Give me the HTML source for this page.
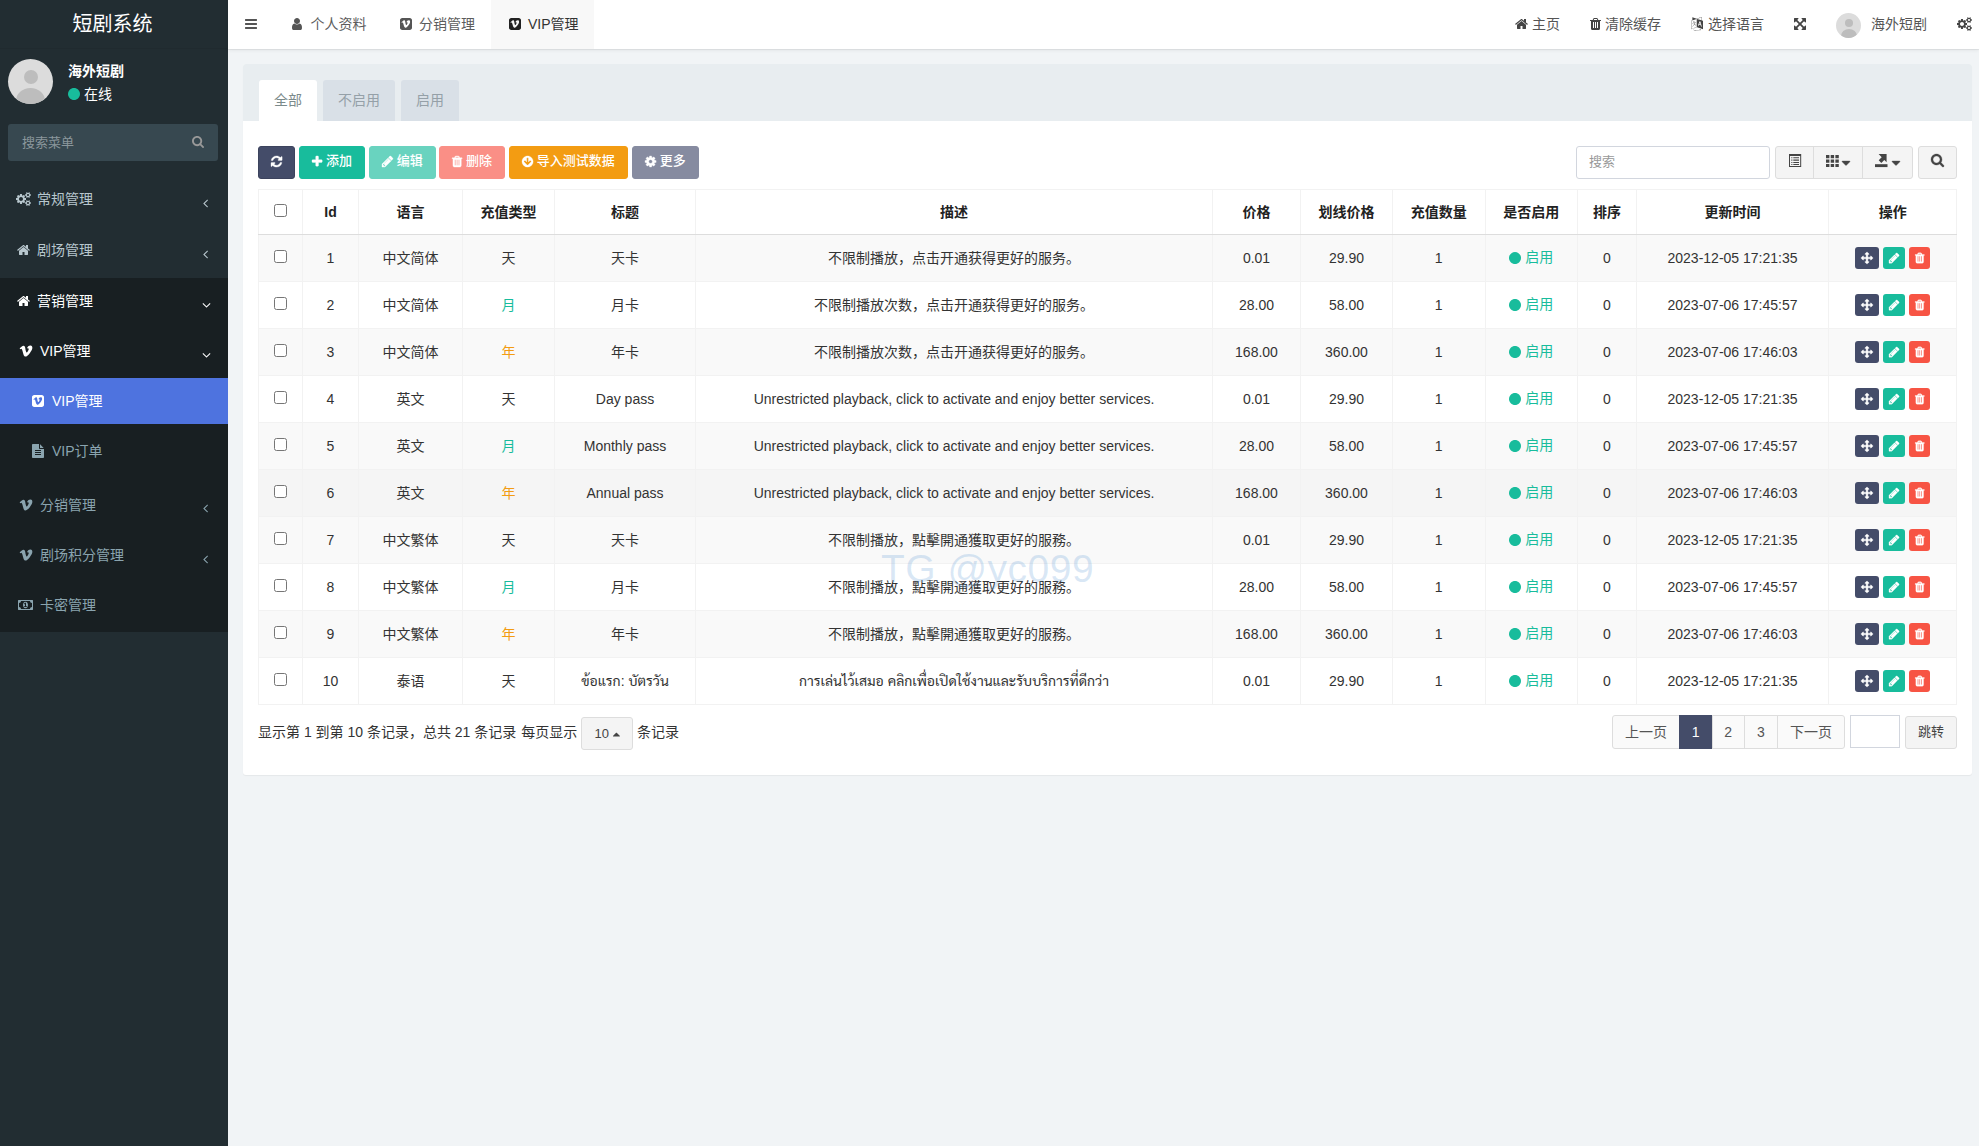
<!DOCTYPE html>
<html lang="zh-CN">
<head>
<meta charset="utf-8">
<title>短剧系统</title>
<style>
*{box-sizing:border-box}
html,body{margin:0;padding:0}
body{width:1979px;height:1146px;overflow:hidden;position:relative;background:#f1f4f6;color:#333;
 font-family:"Liberation Sans","Noto Sans CJK SC",sans-serif;font-size:14px;line-height:20px}
.i{display:inline-block;vertical-align:-2px;overflow:visible}
.abs{position:absolute}
/* sidebar */
#side{position:absolute;left:0;top:0;width:228px;height:1146px;background:#222d32}
#logo{position:absolute;left:0;top:0;width:228px;height:49px;line-height:49px;text-align:center;color:#fff;font-size:20px;border-bottom:1px solid #202a2f;padding-right:3px}
#ava{position:absolute;left:8px;top:59px;width:45px;height:45px;border-radius:50%;background:#dcdcdc;overflow:hidden}
#ava:before{content:"";position:absolute;left:15.500px;top:11px;width:14px;height:14px;border-radius:50%;background:#bdbdbd}
#ava:after{content:"";position:absolute;left:8px;top:29px;width:29px;height:26px;border-radius:50%;background:#bdbdbd}
#uname{position:absolute;left:68px;top:61px;color:#fff;font-weight:bold;font-size:14px}
#ustat{position:absolute;left:68px;top:84px;color:#fff;font-size:14px}
#ustat .i{color:#18bc9c}
#sform{position:absolute;left:8px;top:124px;width:210px;height:37px;background:#374850;border-radius:3px;color:#8b979c;padding:8px 14px;font-size:13px;line-height:21px}
#sform .i{position:absolute;left:184px;top:11px;color:#999}
.m{position:absolute;left:0;width:228px;height:46px;color:#b8c7ce;font-size:14px;line-height:46px;white-space:nowrap}
.m .ic{position:absolute;top:0;height:46px;display:flex;align-items:center}
.m .tx{position:absolute;top:0}
.m .ar{position:absolute;top:3.700px;height:46px;display:flex;align-items:center}
.m.w{color:#fff}
.m.sub{color:#8aa4af}
#dark{position:absolute;left:0;top:277.500px;width:228px;height:354.500px;background:#181f22}
.m.act{background:#4e73df;color:#fff}
/* header */
#hdr{position:absolute;left:228px;top:0;width:1751px;height:49px;background:#fff;box-shadow:0 1px 0 rgba(0,0,0,.05),0 1px 4px rgba(0,0,0,.08)}
#hdr .t{position:absolute;top:0;height:49px;line-height:48px;color:#555;white-space:nowrap;font-size:14px}
#hdr .t .i{color:#444}
#hdr .tab .i,#hdr .bars .i{color:#555}
#hdr .tab{color:#5c5c5c}
#hdr .tab.on{background:#f8f8f8;color:#333}
#hdr .tab.on .i{color:#222}
#hava{position:absolute;top:13px;left:1608px;width:25px;height:25px;border-radius:50%;background:#dcdcdc;overflow:hidden}
#hava:before{content:"";position:absolute;left:8.500px;top:6px;width:8px;height:8px;border-radius:50%;background:#bdbdbd}
#hava:after{content:"";position:absolute;left:4.500px;top:16px;width:16px;height:14px;border-radius:50%;background:#bdbdbd}
/* panel */
#panel{position:absolute;left:243px;top:64px;width:1728.500px;height:711px;background:#fff;border-radius:3px;box-shadow:0 1px 1px rgba(0,0,0,.05)}
#phead{position:absolute;left:0;top:0;width:100%;height:56.500px;background:#e8edf0;border-radius:3px 3px 0 0}
.pt{position:absolute;top:16px;height:40.500px;line-height:40px;padding:0 15px;background:#d9e0e7;color:#95a0a8;border-radius:3px 3px 0 0;font-size:14px}
.pt.on{background:#fff;color:#7b8a8b}
.btn{position:absolute;top:146px;height:33px;line-height:27.500px;font-weight:500;border-radius:3px;color:#fff;font-size:13px;text-align:center;white-space:nowrap;border:1px solid transparent}
.btn .i{vertical-align:-2.500px}
.b-pri{background:#444c69;border-color:#3c435d}
.b-suc{background:#18bc9c;border-color:#18bc9c}
.b-suc.dis{background:#69d3bf;border-color:#69d3bf}
.b-dan.dis{background:#fa8f86;border-color:#fa8f86}
.b-war{background:#f39c12;border-color:#f39c12}
.b-pri.dis{background:#868ba0;border-color:#868ba0}
.b-def{background:#f4f4f4;border-color:#ddd;color:#444}
#sinput{position:absolute;left:1576px;top:146px;width:194px;height:33px;border:1px solid #d2d6de;border-radius:3px;background:#fff;color:#999;font-size:13px;line-height:29.500px;padding:0 12px}
/* table */
#tbl{position:absolute;left:258px;top:189px;width:1697.500px;border-collapse:collapse;table-layout:fixed;font-size:14px}
#tbl th,#tbl td{border:1px solid #f2f2f2;text-align:center;padding:0;white-space:nowrap;overflow:hidden}
#tbl th{height:45px;font-weight:bold;color:#222;border-bottom:1px solid #ddd}
#tbl td{height:47px;color:#333}
#tbl th:last-child,#tbl td:last-child{padding-left:1px}
#tbl tbody tr:nth-child(odd){background:#f9f9f9}
#tbl tbody tr.hov{background:#f5f5f5}
.cb{display:inline-block;width:13px;height:13px;border:1px solid #767676;border-radius:2.500px;background:#fff;vertical-align:0px}
.td{color:#333}.tm{color:#18bc9c}.ty{color:#f39c12}
.st{color:#18bc9c}
.su{position:relative;top:-.8px}
.ob .fa path,.btn .fa path{stroke:currentColor;stroke-width:45}
.ob{display:inline-block;height:22px;border-radius:3px;color:#fff;vertical-align:middle;text-align:center;line-height:20px;margin:0 2px}
.ob .i{vertical-align:-1.500px}
.o1{background:#444c69;width:24px}.o2{background:#18bc9c;width:22px}.o3{background:#f75444;width:21px}
.th{font-family:"Liberation Sans","Sarabun","Noto Sans Thai Looped","Loma","Noto Sans Thai","Noto Sans CJK SC",sans-serif}
/* footer */
#pinfo{position:absolute;left:258px;top:722px;font-size:14px;color:#333;white-space:nowrap}
.pg{position:absolute;top:715px;height:34px;line-height:32px;border:1px solid #ddd;background:#fafafa;color:#555;text-align:center;font-size:14px}
.pg.on{background:#444c69;border-color:#444c69;color:#fff}
#wm{position:absolute;left:881px;top:546px;font-size:39px;line-height:46px;color:rgba(120,170,220,.28);white-space:nowrap;letter-spacing:.5px}
</style>
</head>
<body>
<!-- SIDEBAR -->
<div id="side">
 <div id="logo">短剧系统</div>
 <div id="ava"></div>
 <div id="uname">海外短剧</div>
 <div id="ustat"><svg class="i fa" width="12.0" height="14" viewBox="0 0 1536 1792" ><path fill="currentColor" d="M1536 896C1536 472 1192 128 768 128C344 128 0 472 0 896C0 1320 344 1664 768 1664C1192 1664 1536 1320 1536 896Z"/></svg> 在线</div>
 <div id="sform">搜索菜单<svg class="i fa" width="12.07" height="13" viewBox="0 0 1664 1792" ><path fill="currentColor" d="M1152 832C1152 1079 951 1280 704 1280C457 1280 256 1079 256 832C256 585 457 384 704 384C951 384 1152 585 1152 832ZM1664 1664C1664 1630 1650 1597 1627 1574L1284 1231C1365 1114 1408 974 1408 832C1408 443 1093 128 704 128C315 128 0 443 0 832C0 1221 315 1536 704 1536C846 1536 986 1493 1103 1412L1446 1754C1469 1778 1502 1792 1536 1792C1606 1792 1664 1734 1664 1664Z"/></svg></div>
 <div id="dark"></div>
 <div class="m" style="top:176px"><span class="ic" style="left:15.500px"><svg class="i fa" width="15.0" height="14" viewBox="0 0 1920 1792" ><path fill="currentColor" d="M896 896C896 1037 781 1152 640 1152C499 1152 384 1037 384 896C384 755 499 640 640 640C781 640 896 755 896 896ZM1664 1408C1664 1478 1607 1536 1536 1536C1466 1536 1408 1479 1408 1408C1408 1338 1466 1280 1536 1280C1606 1280 1664 1338 1664 1408ZM1664 384C1664 454 1607 512 1536 512C1466 512 1408 455 1408 384C1408 314 1466 256 1536 256C1606 256 1664 314 1664 384ZM1280 805C1280 791 1270 778 1256 775L1104 752C1095 724 1083 697 1070 670C1098 631 1128 595 1157 556C1161 550 1164 544 1164 537C1164 509 1046 401 1020 377C1014 372 1007 369 999 369C992 369 985 371 979 376L861 465C837 453 812 442 786 434L763 281C761 267 747 256 733 256H547C533 256 521 266 517 280C504 329 499 384 494 434C467 443 442 453 417 466L302 376C296 372 289 369 281 369C252 369 140 490 120 517C115 523 113 530 113 537C113 544 116 551 120 557C152 595 182 632 210 672C197 697 186 722 178 748L23 772C10 774 0 789 0 802V987C0 1001 10 1014 24 1016L176 1040C185 1068 197 1095 211 1122C182 1161 152 1198 123 1236C119 1242 116 1248 116 1255C116 1284 234 1391 260 1415C266 1420 273 1423 281 1423C288 1423 296 1421 301 1416L419 1327C443 1339 468 1350 494 1358L517 1511C519 1525 533 1536 547 1536H733C747 1536 759 1526 763 1512C776 1463 781 1408 786 1357C813 1349 838 1339 863 1326L978 1416C984 1420 991 1423 999 1423C1028 1423 1140 1301 1160 1274C1165 1269 1167 1262 1167 1255C1167 1247 1164 1241 1160 1235C1128 1197 1098 1160 1070 1120C1083 1095 1094 1070 1102 1044L1257 1020C1270 1018 1280 1003 1280 990ZM1920 1338C1920 1323 1791 1309 1771 1307C1763 1289 1753 1271 1741 1255C1750 1235 1792 1135 1792 1117C1792 1115 1791 1112 1788 1110C1776 1103 1669 1040 1664 1040L1658 1042C1624 1076 1594 1115 1566 1154C1556 1153 1546 1152 1536 1152C1526 1152 1516 1153 1506 1154C1496 1139 1421 1040 1408 1040C1403 1040 1296 1104 1284 1110C1281 1112 1280 1115 1280 1117C1280 1134 1322 1235 1331 1255C1319 1271 1309 1289 1301 1307C1281 1309 1152 1323 1152 1338V1478C1152 1493 1281 1507 1301 1509C1309 1528 1319 1545 1331 1561C1322 1581 1280 1682 1280 1699C1280 1701 1281 1704 1284 1706C1296 1713 1403 1777 1408 1777C1421 1777 1496 1677 1506 1662C1516 1663 1526 1664 1536 1664C1546 1664 1556 1663 1566 1662C1576 1677 1651 1777 1664 1777C1669 1777 1776 1713 1788 1706C1791 1704 1792 1702 1792 1699C1792 1681 1750 1581 1741 1561C1753 1545 1763 1528 1771 1509C1791 1507 1920 1493 1920 1478ZM1920 314C1920 299 1791 285 1771 283C1763 265 1753 247 1741 231C1750 211 1792 111 1792 93C1792 91 1791 88 1788 86C1776 79 1669 16 1664 16L1658 18C1624 52 1594 91 1566 130C1556 129 1546 128 1536 128C1526 128 1516 129 1506 130C1496 115 1421 16 1408 16C1403 16 1296 80 1284 86C1281 88 1280 91 1280 93C1280 110 1322 211 1331 231C1319 247 1309 265 1301 283C1281 285 1152 299 1152 314V454C1152 469 1281 483 1301 485C1309 504 1319 521 1331 537C1322 557 1280 658 1280 675C1280 677 1281 680 1284 682C1296 689 1403 753 1408 753C1421 753 1496 653 1506 638C1516 639 1526 640 1536 640C1546 640 1556 639 1566 638C1576 653 1651 753 1664 753C1669 753 1776 689 1788 682C1791 680 1792 678 1792 675C1792 657 1750 557 1741 537C1753 521 1763 504 1771 485C1791 483 1920 469 1920 454Z"/></svg></span><span class="tx" style="left:37px">常规管理</span><span class="ar" style="left:202.700px"><svg class="i fa" width="5.0" height="14" viewBox="0 0 640 1792" ><path fill="currentColor" d="M627 544C627 535 623 527 617 521L567 471C561 465 552 461 544 461C536 461 527 465 521 471L55 937C49 943 45 952 45 960C45 968 49 977 55 983L521 1449C527 1455 536 1459 544 1459C552 1459 561 1455 567 1449L617 1399C623 1393 627 1384 627 1376C627 1368 623 1359 617 1353L224 960L617 567C623 561 627 552 627 544Z"/></svg></span></div>
 <div class="m" style="top:227px"><span class="ic" style="left:16.600px"><svg class="i fa" width="13.0" height="14" viewBox="0 0 1664 1792" ><path fill="currentColor" d="M1408 992C1408 990 1408 988 1407 986L832 512L257 986C257 988 256 990 256 992V1472C256 1507 285 1536 320 1536H704V1152H960V1536H1344C1379 1536 1408 1507 1408 1472ZM1631 923C1642 910 1640 889 1627 878L1408 696V288C1408 270 1394 256 1376 256H1184C1166 256 1152 270 1152 288V483L908 279C866 244 798 244 756 279L37 878C24 889 22 910 33 923L95 997C100 1003 108 1007 116 1008C125 1009 133 1006 140 1001L832 424L1524 1001C1530 1006 1537 1008 1545 1008C1546 1008 1547 1008 1548 1008C1556 1007 1564 1003 1569 997L1631 923Z"/></svg></span><span class="tx" style="left:37px">剧场管理</span><span class="ar" style="left:202.700px"><svg class="i fa" width="5.0" height="14" viewBox="0 0 640 1792" ><path fill="currentColor" d="M627 544C627 535 623 527 617 521L567 471C561 465 552 461 544 461C536 461 527 465 521 471L55 937C49 943 45 952 45 960C45 968 49 977 55 983L521 1449C527 1455 536 1459 544 1459C552 1459 561 1455 567 1449L617 1399C623 1393 627 1384 627 1376C627 1368 623 1359 617 1353L224 960L617 567C623 561 627 552 627 544Z"/></svg></span></div>
 <div class="m w" style="top:278px"><span class="ic" style="left:16.600px"><svg class="i fa" width="13.0" height="14" viewBox="0 0 1664 1792" ><path fill="currentColor" d="M1408 992C1408 990 1408 988 1407 986L832 512L257 986C257 988 256 990 256 992V1472C256 1507 285 1536 320 1536H704V1152H960V1536H1344C1379 1536 1408 1507 1408 1472ZM1631 923C1642 910 1640 889 1627 878L1408 696V288C1408 270 1394 256 1376 256H1184C1166 256 1152 270 1152 288V483L908 279C866 244 798 244 756 279L37 878C24 889 22 910 33 923L95 997C100 1003 108 1007 116 1008C125 1009 133 1006 140 1001L832 424L1524 1001C1530 1006 1537 1008 1545 1008C1546 1008 1547 1008 1548 1008C1556 1007 1564 1003 1569 997L1631 923Z"/></svg></span><span class="tx" style="left:37px">营销管理</span><span class="ar" style="left:202px"><svg class="i fa" width="9.0" height="14" viewBox="0 0 1152 1792" ><path fill="currentColor" d="M1075 736C1075 728 1071 719 1065 713L1015 663C1009 657 1000 653 992 653C984 653 975 657 969 663L576 1056L183 663C177 657 168 653 160 653C151 653 143 657 137 663L87 713C81 719 77 728 77 736C77 744 81 753 87 759L553 1225C559 1231 568 1235 576 1235C584 1235 593 1231 599 1225L1065 759C1071 753 1075 744 1075 736Z"/></svg></span></div>
 <div class="m w" style="top:328px"><span class="ic" style="left:19px"><svg class="i fa" width="14.0" height="14" viewBox="0 0 1792 1792" ><path fill="currentColor" d="M1709 518C1719 306 1640 197 1473 192C1247 185 1094 312 1014 574C1056 557 1096 548 1135 548C1217 548 1253 594 1244 687C1239 743 1203 825 1135 933C1066 1041 1015 1094 981 1094C937 1094 898 1011 861 845C849 797 826 672 795 472C765 287 688 201 561 213C507 218 426 265 320 359C241 428 162 500 82 571L159 669C232 618 274 593 286 593C342 593 395 680 443 855C487 1016 531 1177 575 1337C640 1512 720 1600 815 1600C969 1600 1155 1456 1377 1169C1591 893 1702 676 1709 518Z"/></svg></span><span class="tx" style="left:40px">VIP管理</span><span class="ar" style="left:202px"><svg class="i fa" width="9.0" height="14" viewBox="0 0 1152 1792" ><path fill="currentColor" d="M1075 736C1075 728 1071 719 1065 713L1015 663C1009 657 1000 653 992 653C984 653 975 657 969 663L576 1056L183 663C177 657 168 653 160 653C151 653 143 657 137 663L87 713C81 719 77 728 77 736C77 744 81 753 87 759L553 1225C559 1231 568 1235 576 1235C584 1235 593 1231 599 1225L1065 759C1071 753 1075 744 1075 736Z"/></svg></span></div>
 <div class="m act" style="top:378px"><span class="ic" style="left:32px"><svg class="i fa" width="12.0" height="14" viewBox="0 0 1536 1792" ><path fill="currentColor" d="M1292 638C1288 746 1212 894 1066 1082C915 1278 787 1376 683 1376C618 1376 564 1316 519 1197C489 1087 459 978 429 868C396 749 360 689 322 689C314 689 285 707 235 741L183 674C238 626 291 577 345 530C417 466 473 434 509 430C596 422 649 481 669 607C691 744 706 828 714 862C740 975 766 1031 796 1031C819 1031 854 995 901 921C947 848 972 792 975 754C982 690 957 658 901 658C874 658 847 665 819 677C873 498 977 411 1131 416C1245 420 1299 493 1292 638ZM1536 416C1536 257 1407 128 1248 128H288C129 128 0 257 0 416V1376C0 1535 129 1664 288 1664H1248C1407 1664 1536 1535 1536 1376Z"/></svg></span><span class="tx" style="left:52px">VIP管理</span></div>
 <div class="m sub" style="top:428px"><span class="ic" style="left:32px"><svg class="i fa" width="12.0" height="14" viewBox="0 0 1536 1792" ><path fill="currentColor" d="M1468 476 1060 68C1050 58 1038 49 1024 40V512H1496C1487 498 1478 486 1468 476ZM992 640C939 640 896 597 896 544V0H96C43 0 0 43 0 96V1696C0 1749 43 1792 96 1792H1440C1493 1792 1536 1749 1536 1696V640ZM1152 1376C1152 1394 1138 1408 1120 1408H416C398 1408 384 1394 384 1376V1312C384 1294 398 1280 416 1280H1120C1138 1280 1152 1294 1152 1312ZM1152 1120C1152 1138 1138 1152 1120 1152H416C398 1152 384 1138 384 1120V1056C384 1038 398 1024 416 1024H1120C1138 1024 1152 1038 1152 1056ZM1152 864C1152 882 1138 896 1120 896H416C398 896 384 882 384 864V800C384 782 398 768 416 768H1120C1138 768 1152 782 1152 800Z"/></svg></span><span class="tx" style="left:52px">VIP订单</span></div>
 <div class="m sub" style="top:481.500px"><span class="ic" style="left:19px"><svg class="i fa" width="14.0" height="14" viewBox="0 0 1792 1792" ><path fill="currentColor" d="M1709 518C1719 306 1640 197 1473 192C1247 185 1094 312 1014 574C1056 557 1096 548 1135 548C1217 548 1253 594 1244 687C1239 743 1203 825 1135 933C1066 1041 1015 1094 981 1094C937 1094 898 1011 861 845C849 797 826 672 795 472C765 287 688 201 561 213C507 218 426 265 320 359C241 428 162 500 82 571L159 669C232 618 274 593 286 593C342 593 395 680 443 855C487 1016 531 1177 575 1337C640 1512 720 1600 815 1600C969 1600 1155 1456 1377 1169C1591 893 1702 676 1709 518Z"/></svg></span><span class="tx" style="left:40px">分销管理</span><span class="ar" style="left:202.700px"><svg class="i fa" width="5.0" height="14" viewBox="0 0 640 1792" ><path fill="currentColor" d="M627 544C627 535 623 527 617 521L567 471C561 465 552 461 544 461C536 461 527 465 521 471L55 937C49 943 45 952 45 960C45 968 49 977 55 983L521 1449C527 1455 536 1459 544 1459C552 1459 561 1455 567 1449L617 1399C623 1393 627 1384 627 1376C627 1368 623 1359 617 1353L224 960L617 567C623 561 627 552 627 544Z"/></svg></span></div>
 <div class="m sub" style="top:532px"><span class="ic" style="left:19px"><svg class="i fa" width="14.0" height="14" viewBox="0 0 1792 1792" ><path fill="currentColor" d="M1709 518C1719 306 1640 197 1473 192C1247 185 1094 312 1014 574C1056 557 1096 548 1135 548C1217 548 1253 594 1244 687C1239 743 1203 825 1135 933C1066 1041 1015 1094 981 1094C937 1094 898 1011 861 845C849 797 826 672 795 472C765 287 688 201 561 213C507 218 426 265 320 359C241 428 162 500 82 571L159 669C232 618 274 593 286 593C342 593 395 680 443 855C487 1016 531 1177 575 1337C640 1512 720 1600 815 1600C969 1600 1155 1456 1377 1169C1591 893 1702 676 1709 518Z"/></svg></span><span class="tx" style="left:40px">剧场积分管理</span><span class="ar" style="left:202.700px"><svg class="i fa" width="5.0" height="14" viewBox="0 0 640 1792" ><path fill="currentColor" d="M627 544C627 535 623 527 617 521L567 471C561 465 552 461 544 461C536 461 527 465 521 471L55 937C49 943 45 952 45 960C45 968 49 977 55 983L521 1449C527 1455 536 1459 544 1459C552 1459 561 1455 567 1449L617 1399C623 1393 627 1384 627 1376C627 1368 623 1359 617 1353L224 960L617 567C623 561 627 552 627 544Z"/></svg></span></div>
 <div class="m sub" style="top:582px"><span class="ic" style="left:18px"><svg class="i fa" width="15.0" height="14" viewBox="0 0 1920 1792" ><path fill="currentColor" d="M768 1152V1056H896V768H894C878 793 863 804 839 825L762 745L910 608H1024V1056H1152V1152ZM1280 896C1280 714 1170 480 960 480C750 480 640 714 640 896C640 1078 750 1312 960 1312C1170 1312 1280 1078 1280 896ZM1792 1152C1651 1152 1536 1267 1536 1408H384C384 1267 269 1152 128 1152V640C269 640 384 525 384 384H1536C1536 525 1651 640 1792 640V1152ZM1920 320C1920 285 1891 256 1856 256H64C29 256 0 285 0 320V1472C0 1507 29 1536 64 1536H1856C1891 1536 1920 1507 1920 1472Z"/></svg></span><span class="tx" style="left:40px">卡密管理</span></div>
</div>
<!-- HEADER -->
<div id="hdr">
 <div class="t bars" style="left:16.500px"><svg class="i fa" width="12.0" height="14" viewBox="0 0 1536 1792" ><path fill="currentColor" d="M1536 1344C1536 1309 1507 1280 1472 1280H64C29 1280 0 1309 0 1344V1472C0 1507 29 1536 64 1536H1472C1507 1536 1536 1507 1536 1472ZM1536 832C1536 797 1507 768 1472 768H64C29 768 0 797 0 832V960C0 995 29 1024 64 1024H1472C1507 1024 1536 995 1536 960ZM1536 320C1536 285 1507 256 1472 256H64C29 256 0 285 0 320V448C0 483 29 512 64 512H1472C1507 512 1536 483 1536 448Z"/></svg></div>
 <div class="t tab" style="left:45px;width:108px;padding-left:19px"><svg class="i fa" width="10.0" height="14" viewBox="0 0 1280 1792" ><path fill="currentColor" d="M1280 1399C1280 1136 1215 832 953 832C872 911 762 960 640 960C518 960 408 911 327 832C65 832 0 1136 0 1399C0 1545 96 1664 213 1664H1067C1184 1664 1280 1545 1280 1399ZM1024 512C1024 300 852 128 640 128C428 128 256 300 256 512C256 724 428 896 640 896C852 896 1024 724 1024 512Z"/></svg><span style="margin-left:8.500px">个人资料</span></div>
 <div class="t tab" style="left:153px;width:109px;padding-left:19px"><svg class="i fa" width="12.0" height="14" viewBox="0 0 1536 1792" ><path fill="currentColor" d="M1292 638C1288 746 1212 894 1066 1082C915 1278 787 1376 683 1376C618 1376 564 1316 519 1197C489 1087 459 978 429 868C396 749 360 689 322 689C314 689 285 707 235 741L183 674C238 626 291 577 345 530C417 466 473 434 509 430C596 422 649 481 669 607C691 744 706 828 714 862C740 975 766 1031 796 1031C819 1031 854 995 901 921C947 848 972 792 975 754C982 690 957 658 901 658C874 658 847 665 819 677C873 498 977 411 1131 416C1245 420 1299 493 1292 638ZM1536 416C1536 257 1407 128 1248 128H288C129 128 0 257 0 416V1376C0 1535 129 1664 288 1664H1248C1407 1664 1536 1535 1536 1376Z"/></svg><span style="margin-left:7px">分销管理</span></div>
 <div class="t tab on" style="left:262.500px;width:103px;padding-left:18.500px"><svg class="i fa" width="12.0" height="14" viewBox="0 0 1536 1792" ><path fill="currentColor" d="M1292 638C1288 746 1212 894 1066 1082C915 1278 787 1376 683 1376C618 1376 564 1316 519 1197C489 1087 459 978 429 868C396 749 360 689 322 689C314 689 285 707 235 741L183 674C238 626 291 577 345 530C417 466 473 434 509 430C596 422 649 481 669 607C691 744 706 828 714 862C740 975 766 1031 796 1031C819 1031 854 995 901 921C947 848 972 792 975 754C982 690 957 658 901 658C874 658 847 665 819 677C873 498 977 411 1131 416C1245 420 1299 493 1292 638ZM1536 416C1536 257 1407 128 1248 128H288C129 128 0 257 0 416V1376C0 1535 129 1664 288 1664H1248C1407 1664 1536 1535 1536 1376Z"/></svg><span style="margin-left:7px">VIP管理</span></div>
 <div class="t" style="left:1287px"><svg class="i fa" width="13.0" height="14" viewBox="0 0 1664 1792" ><path fill="currentColor" d="M1408 992C1408 990 1408 988 1407 986L832 512L257 986C257 988 256 990 256 992V1472C256 1507 285 1536 320 1536H704V1152H960V1536H1344C1379 1536 1408 1507 1408 1472ZM1631 923C1642 910 1640 889 1627 878L1408 696V288C1408 270 1394 256 1376 256H1184C1166 256 1152 270 1152 288V483L908 279C866 244 798 244 756 279L37 878C24 889 22 910 33 923L95 997C100 1003 108 1007 116 1008C125 1009 133 1006 140 1001L832 424L1524 1001C1530 1006 1537 1008 1545 1008C1546 1008 1547 1008 1548 1008C1556 1007 1564 1003 1569 997L1631 923Z"/></svg> 主页</div>
 <div class="t" style="left:1362px"><svg class="i fa" width="11.0" height="14" viewBox="0 0 1408 1792" ><path fill="currentColor" d="M512 1376C512 1394 498 1408 480 1408H416C398 1408 384 1394 384 1376V672C384 654 398 640 416 640H480C498 640 512 654 512 672V1376ZM768 1376C768 1394 754 1408 736 1408H672C654 1408 640 1394 640 1376V672C640 654 654 640 672 640H736C754 640 768 654 768 672V1376ZM1024 1376C1024 1394 1010 1408 992 1408H928C910 1408 896 1394 896 1376V672C896 654 910 640 928 640H992C1010 640 1024 654 1024 672V1376ZM480 384 529 267C532 263 540 257 546 256H863C868 257 877 263 880 267L928 384ZM1408 416C1408 398 1394 384 1376 384H1067L997 217C977 168 917 128 864 128H544C491 128 431 168 411 217L341 384H32C14 384 0 398 0 416V480C0 498 14 512 32 512H128V1464C128 1574 200 1664 288 1664H1120C1208 1664 1280 1570 1280 1460V512H1376C1394 512 1408 498 1408 480Z"/></svg> 清除缓存</div>
 <div class="t" style="left:1462.500px"><svg class="i fa" width="12.0" height="14" viewBox="0 0 1536 1792" ><path fill="currentColor" d="M654 1078C656 1070 645 1024 639 1022C633 1020 514 970 497 962C483 955 449 941 433 934C478 864 506 811 510 803C517 788 565 694 566 689C567 683 568 661 567 656C566 651 549 661 525 669C501 677 456 707 438 710C421 714 365 735 336 745C307 755 253 771 231 777C209 783 189 784 177 788C178 805 182 811 182 811C185 816 197 829 210 832C224 836 247 835 257 832C268 830 286 821 288 817C290 813 287 801 291 797C295 794 350 781 370 775C391 768 470 741 480 742C477 754 414 880 393 918C373 956 254 1122 229 1151C209 1174 163 1231 147 1243C151 1245 180 1242 185 1239C218 1218 272 1150 290 1129C342 1068 388 1003 424 948C431 951 488 998 503 1008C518 1018 577 1051 590 1057C603 1062 652 1085 654 1078ZM449 592C446 579 438 575 428 575C418 576 388 584 373 589C359 593 328 602 315 605C302 608 273 604 269 600C265 596 274 631 286 644C308 666 326 669 335 670C355 670 380 664 395 658C410 652 435 639 445 620C447 616 452 609 449 592ZM1147 721 1071 906 1210 948ZM39 1521V490L733 257V1289ZM1280 1204 1243 1069 1032 1004 987 1114 885 1083 1101 547 1201 578 1382 1235ZM777 242 1350 46V426ZM1088 1565 1131 1638C1100 1655 1071 1674 1038 1689C924 1738 839 1754 714 1754C613 1754 487 1713 397 1668C384 1662 337 1633 328 1633C318 1633 310 1641 310 1652C310 1659 312 1663 318 1668C402 1729 595 1792 701 1792H785C814 1792 847 1786 876 1780C971 1764 1071 1724 1152 1672L1192 1738L1246 1578ZM1536 486 1389 439V21C1389 8 1380 0 1369 0C1360 0 738 215 731 217L173 19V403C88 432 27 452 24 453C18 455 10 457 4 464C2 466 1 471 0 474V1552C0 1553 1 1554 1 1555C4 1563 11 1568 19 1568C29 1568 746 1326 762 1319C762 1319 763 1319 1536 1565Z"/></svg><span style="margin-left:5.500px">选择语言</span></div>
 <div class="t" style="left:1565.700px"><svg class="i fa" width="12.0" height="14" viewBox="0 0 1536 1792" ><path fill="currentColor" d="M1283 541 1427 685C1439 697 1455 704 1472 704C1480 704 1489 702 1497 699C1520 689 1536 666 1536 640V192C1536 157 1507 128 1472 128H1024C998 128 975 144 965 168C955 191 960 219 979 237L1123 381L768 736L413 381L557 237C576 219 581 191 571 168C561 144 538 128 512 128H64C29 128 0 157 0 192V640C0 666 16 689 40 699C47 702 56 704 64 704C81 704 97 697 109 685L253 541L608 896L253 1251L109 1107C91 1088 63 1083 40 1093C16 1103 0 1126 0 1152V1600C0 1635 29 1664 64 1664H512C538 1664 561 1648 571 1624C581 1601 576 1573 557 1555L413 1411L768 1056L1123 1411L979 1555C960 1573 955 1601 965 1624C975 1648 998 1664 1024 1664H1472C1507 1664 1536 1635 1536 1600V1152C1536 1126 1520 1103 1497 1093C1473 1083 1445 1088 1427 1107L1283 1251L928 896Z"/></svg></div>
 <div id="hava"></div>
 <div class="t" style="left:1643px">海外短剧</div>
 <div class="t" style="left:1729px"><svg class="i fa" width="15.0" height="14" viewBox="0 0 1920 1792" ><path fill="currentColor" d="M896 896C896 1037 781 1152 640 1152C499 1152 384 1037 384 896C384 755 499 640 640 640C781 640 896 755 896 896ZM1664 1408C1664 1478 1607 1536 1536 1536C1466 1536 1408 1479 1408 1408C1408 1338 1466 1280 1536 1280C1606 1280 1664 1338 1664 1408ZM1664 384C1664 454 1607 512 1536 512C1466 512 1408 455 1408 384C1408 314 1466 256 1536 256C1606 256 1664 314 1664 384ZM1280 805C1280 791 1270 778 1256 775L1104 752C1095 724 1083 697 1070 670C1098 631 1128 595 1157 556C1161 550 1164 544 1164 537C1164 509 1046 401 1020 377C1014 372 1007 369 999 369C992 369 985 371 979 376L861 465C837 453 812 442 786 434L763 281C761 267 747 256 733 256H547C533 256 521 266 517 280C504 329 499 384 494 434C467 443 442 453 417 466L302 376C296 372 289 369 281 369C252 369 140 490 120 517C115 523 113 530 113 537C113 544 116 551 120 557C152 595 182 632 210 672C197 697 186 722 178 748L23 772C10 774 0 789 0 802V987C0 1001 10 1014 24 1016L176 1040C185 1068 197 1095 211 1122C182 1161 152 1198 123 1236C119 1242 116 1248 116 1255C116 1284 234 1391 260 1415C266 1420 273 1423 281 1423C288 1423 296 1421 301 1416L419 1327C443 1339 468 1350 494 1358L517 1511C519 1525 533 1536 547 1536H733C747 1536 759 1526 763 1512C776 1463 781 1408 786 1357C813 1349 838 1339 863 1326L978 1416C984 1420 991 1423 999 1423C1028 1423 1140 1301 1160 1274C1165 1269 1167 1262 1167 1255C1167 1247 1164 1241 1160 1235C1128 1197 1098 1160 1070 1120C1083 1095 1094 1070 1102 1044L1257 1020C1270 1018 1280 1003 1280 990ZM1920 1338C1920 1323 1791 1309 1771 1307C1763 1289 1753 1271 1741 1255C1750 1235 1792 1135 1792 1117C1792 1115 1791 1112 1788 1110C1776 1103 1669 1040 1664 1040L1658 1042C1624 1076 1594 1115 1566 1154C1556 1153 1546 1152 1536 1152C1526 1152 1516 1153 1506 1154C1496 1139 1421 1040 1408 1040C1403 1040 1296 1104 1284 1110C1281 1112 1280 1115 1280 1117C1280 1134 1322 1235 1331 1255C1319 1271 1309 1289 1301 1307C1281 1309 1152 1323 1152 1338V1478C1152 1493 1281 1507 1301 1509C1309 1528 1319 1545 1331 1561C1322 1581 1280 1682 1280 1699C1280 1701 1281 1704 1284 1706C1296 1713 1403 1777 1408 1777C1421 1777 1496 1677 1506 1662C1516 1663 1526 1664 1536 1664C1546 1664 1556 1663 1566 1662C1576 1677 1651 1777 1664 1777C1669 1777 1776 1713 1788 1706C1791 1704 1792 1702 1792 1699C1792 1681 1750 1581 1741 1561C1753 1545 1763 1528 1771 1509C1791 1507 1920 1493 1920 1478ZM1920 314C1920 299 1791 285 1771 283C1763 265 1753 247 1741 231C1750 211 1792 111 1792 93C1792 91 1791 88 1788 86C1776 79 1669 16 1664 16L1658 18C1624 52 1594 91 1566 130C1556 129 1546 128 1536 128C1526 128 1516 129 1506 130C1496 115 1421 16 1408 16C1403 16 1296 80 1284 86C1281 88 1280 91 1280 93C1280 110 1322 211 1331 231C1319 247 1309 265 1301 283C1281 285 1152 299 1152 314V454C1152 469 1281 483 1301 485C1309 504 1319 521 1331 537C1322 557 1280 658 1280 675C1280 677 1281 680 1284 682C1296 689 1403 753 1408 753C1421 753 1496 653 1506 638C1516 639 1526 640 1536 640C1546 640 1556 639 1566 638C1576 653 1651 753 1664 753C1669 753 1776 689 1788 682C1791 680 1792 678 1792 675C1792 657 1750 557 1741 537C1753 521 1763 504 1771 485C1791 483 1920 469 1920 454Z"/></svg></div>
</div>
<!-- PANEL -->
<div id="panel">
 <div id="phead">
  <div class="pt on" style="left:16px;width:58px">全部</div>
  <div class="pt" style="left:80px;width:72px">不启用</div>
  <div class="pt" style="left:158px;width:58px">启用</div>
 </div>
</div>
<div class="btn b-pri" style="left:258px;width:37px"><svg class="i fa" width="11.14" height="13" viewBox="0 0 1536 1792" ><path fill="currentColor" d="M1511 1056C1511 1039 1497 1024 1479 1024H1287C1272 1024 1262 1033 1257 1047C1240 1087 1228 1125 1204 1164C1111 1316 946 1408 768 1408C639 1408 514 1358 420 1270L557 1133C569 1121 576 1105 576 1088C576 1053 547 1024 512 1024H64C29 1024 0 1053 0 1088V1536C0 1571 29 1600 64 1600C81 1600 97 1593 109 1581L238 1452C380 1587 569 1664 764 1664C1133 1664 1425 1417 1510 1063C1511 1061 1511 1058 1511 1056ZM1536 256C1536 221 1507 192 1472 192C1455 192 1439 199 1427 211L1297 340C1155 206 964 128 768 128C399 128 104 374 18 729C18 731 18 734 18 736C18 753 32 768 50 768H249C264 768 274 759 279 745C296 705 308 667 332 628C425 476 590 384 768 384C897 384 1022 433 1117 521L979 659C967 671 960 687 960 704C960 739 989 768 1024 768H1472C1507 768 1536 739 1536 704Z"/></svg></div>
<div class="btn b-suc" style="left:299px;width:66px"><svg class="i fa" width="10.21" height="13" viewBox="0 0 1408 1792" ><path fill="currentColor" d="M1408 736C1408 683 1365 640 1312 640H896V224C896 171 853 128 800 128H608C555 128 512 171 512 224V640H96C43 640 0 683 0 736V928C0 981 43 1024 96 1024H512V1440C512 1493 555 1536 608 1536H800C853 1536 896 1493 896 1440V1024H1312C1365 1024 1408 981 1408 928Z"/></svg> 添加</div>
<div class="btn b-suc dis" style="left:369px;width:67px"><svg class="i fa" width="11.14" height="13" viewBox="0 0 1536 1792" ><path fill="currentColor" d="M363 1536H256V1408H128V1301L219 1210L454 1445ZM886 608C886 614 884 620 879 625L337 1167C332 1172 326 1174 320 1174C307 1174 298 1165 298 1152C298 1146 300 1140 305 1135L847 593C852 588 858 586 864 586C877 586 886 595 886 608ZM832 416 0 1248V1664H416L1248 832ZM1515 512C1515 478 1501 445 1478 421L1243 187C1219 163 1186 149 1152 149C1118 149 1085 163 1062 187L896 352L1312 768L1478 602C1501 579 1515 546 1515 512Z"/></svg> 编辑</div>
<div class="btn b-dan dis" style="left:439px;width:66px"><svg class="i fa" width="10.21" height="13" viewBox="0 0 1408 1792" ><path fill="currentColor" d="M512 1376C512 1394 498 1408 480 1408H416C398 1408 384 1394 384 1376V672C384 654 398 640 416 640H480C498 640 512 654 512 672V1376ZM768 1376C768 1394 754 1408 736 1408H672C654 1408 640 1394 640 1376V672C640 654 654 640 672 640H736C754 640 768 654 768 672V1376ZM1024 1376C1024 1394 1010 1408 992 1408H928C910 1408 896 1394 896 1376V672C896 654 910 640 928 640H992C1010 640 1024 654 1024 672V1376ZM480 384 529 267C532 263 540 257 546 256H863C868 257 877 263 880 267L928 384ZM1408 416C1408 398 1394 384 1376 384H1067L997 217C977 168 917 128 864 128H544C491 128 431 168 411 217L341 384H32C14 384 0 398 0 416V480C0 498 14 512 32 512H128V1464C128 1574 200 1664 288 1664H1120C1208 1664 1280 1570 1280 1460V512H1376C1394 512 1408 498 1408 480Z"/></svg> 删除</div>
<div class="btn b-war" style="left:509px;width:119px"><svg class="i fa" width="11.14" height="13" viewBox="0 0 1536 1792" ><path fill="currentColor" d="M1284 897C1284 914 1278 930 1266 942L904 1304L813 1395C801 1407 785 1413 768 1413C751 1413 735 1407 723 1395L632 1304L270 942C258 930 252 914 252 897C252 880 258 864 270 852L361 761C373 749 389 742 406 742C423 742 439 749 451 761L640 950V448C640 413 669 384 704 384H832C867 384 896 413 896 448V950L1085 761C1097 749 1113 743 1130 743C1147 743 1163 749 1175 761L1266 852C1278 864 1284 880 1284 897ZM1536 896C1536 472 1192 128 768 128C344 128 0 472 0 896C0 1320 344 1664 768 1664C1192 1664 1536 1320 1536 896Z"/></svg> 导入测试数据</div>
<div class="btn b-pri dis" style="left:632px;width:67px"><svg class="i fa" width="11.14" height="13" viewBox="0 0 1536 1792" ><path fill="currentColor" d="M1024 896C1024 1037 909 1152 768 1152C627 1152 512 1037 512 896C512 755 627 640 768 640C909 640 1024 755 1024 896ZM1536 787C1536 770 1524 754 1507 751L1324 723C1314 690 1300 657 1283 625C1317 578 1354 534 1388 488C1393 481 1396 474 1396 465C1396 457 1394 449 1389 443C1347 384 1277 322 1224 273C1217 267 1208 263 1199 263C1190 263 1181 266 1175 272L1033 379C1004 364 974 352 943 342L915 158C913 141 897 128 879 128H657C639 128 625 140 621 156C605 216 599 281 592 342C561 352 530 365 501 380L363 273C355 267 346 263 337 263C303 263 168 409 144 442C139 449 135 456 135 465C135 474 139 482 145 489C182 534 218 579 252 627C236 657 223 687 213 719L27 747C12 750 0 768 0 783V1005C0 1022 12 1038 29 1041L212 1068C222 1102 236 1135 253 1167C219 1214 182 1258 148 1304C143 1311 140 1318 140 1327C140 1335 142 1343 147 1350C189 1408 259 1470 312 1518C319 1525 328 1529 337 1529C346 1529 355 1526 362 1520L503 1413C532 1428 562 1440 593 1450L621 1634C623 1651 639 1664 657 1664H879C897 1664 911 1652 915 1636C931 1576 937 1511 944 1450C975 1440 1006 1427 1035 1412L1173 1520C1181 1525 1190 1529 1199 1529C1233 1529 1368 1382 1392 1350C1398 1343 1401 1336 1401 1327C1401 1318 1397 1309 1391 1302C1354 1257 1318 1213 1284 1164C1300 1135 1312 1105 1323 1073L1508 1045C1524 1042 1536 1024 1536 1009Z"/></svg> 更多</div>
<div id="sinput">搜索</div>
<div class="btn b-def" style="left:1775px;width:39px;border-radius:3px 0 0 3px"><svg class="i" width="12.2" height="13" viewBox="0 0 12.2 13" style="vertical-align:-2px;margin-left:1px"><path fill="currentColor" fill-rule="evenodd" d="M0 0h12.2v13H0zM1 2.1v9.900h10.200V2.100z"/><path fill="currentColor" d="M2.300 3.300h1.100v1H2.300zM4.300 3.300h5.700v1H4.300zM2.300 5.500h1.100v1.300H2.300zM4.300 5.500h5.700v1.300H4.300zM2.300 8h1.100v1H2.300zM4.300 8h5.700v1H4.300zM2.300 10h1.100v1H2.300zM4.300 10h5.700v1H4.300z"/></svg></div>
<div class="btn b-def" style="left:1813px;width:50px;border-radius:0"><svg class="i" width="12.8" height="12.1" viewBox="0 0 12.8 12.1" style="vertical-align:-2.500px"><path fill="currentColor" d="M0 0h3.400v3.200H0zM4.700 0h3.400v3.200H4.700zM9.400 0h3.400v3.200H9.400zM0 4.450h3.400v3.200H0zM4.700 4.450h3.400v3.200H4.700zM9.400 4.450h3.400v3.200H9.400zM0 8.900h3.400v3.200H0zM4.700 8.900h3.400v3.200H4.700zM9.400 8.900h3.400v3.200H9.400z"/></svg><span style="margin-left:4px"><svg class="i fa" width="8.0" height="14" viewBox="0 0 1024 1792" style="vertical-align:-5px"><path fill="currentColor" d="M1024 704C1024 669 995 640 960 640H64C29 640 0 669 0 704C0 721 7 737 19 749L467 1197C479 1209 495 1216 512 1216C529 1216 545 1209 557 1197L1005 749C1017 737 1024 721 1024 704Z"/></svg></span></div>
<div class="btn b-def" style="left:1862px;width:51px;border-radius:0 3px 3px 0"><svg class="i" width="12.5" height="13.1" viewBox="0 0 12.5 13.1" style="vertical-align:-2.500px"><path fill="currentColor" d="M0 10.200h12.500v2.900H0z"/><path fill="currentColor" d="M3.600 0h8v8.200L9.300 5.900 6.300 8.900l-2.600-2.600 3-3z"/></svg><span style="margin-left:4px"><svg class="i fa" width="8.0" height="14" viewBox="0 0 1024 1792" style="vertical-align:-5px"><path fill="currentColor" d="M1024 704C1024 669 995 640 960 640H64C29 640 0 669 0 704C0 721 7 737 19 749L467 1197C479 1209 495 1216 512 1216C529 1216 545 1209 557 1197L1005 749C1017 737 1024 721 1024 704Z"/></svg></span></div>
<div class="btn b-def" style="left:1918px;width:39px"><svg class="i fa" width="13.0" height="14" viewBox="0 0 1664 1792" style="vertical-align:-2px"><path fill="currentColor" d="M1152 832C1152 1079 951 1280 704 1280C457 1280 256 1079 256 832C256 585 457 384 704 384C951 384 1152 585 1152 832ZM1664 1664C1664 1630 1650 1597 1627 1574L1284 1231C1365 1114 1408 974 1408 832C1408 443 1093 128 704 128C315 128 0 443 0 832C0 1221 315 1536 704 1536C846 1536 986 1493 1103 1412L1446 1754C1469 1778 1502 1792 1536 1792C1606 1792 1664 1734 1664 1664Z"/></svg></div>

<table id="tbl">
<colgroup><col style="width:44px"><col style="width:56px"><col style="width:104px"><col style="width:92px"><col style="width:141px"><col style="width:517px"><col style="width:88px"><col style="width:92px"><col style="width:92.500px"><col style="width:92.500px"><col style="width:59px"><col style="width:192px"><col style="width:127.500px"></colgroup>
<thead><tr><th><span class="cb"></span></th><th>Id</th><th>语言</th><th>充值类型</th><th>标题</th><th>描述</th><th>价格</th><th>划线价格</th><th>充值数量</th><th>是否启用</th><th>排序</th><th>更新时间</th><th>操作</th></tr></thead>
<tbody>
<tr><td><span class="cb"></span></td><td>1</td><td>中文简体</td><td><span class="td">天</span></td><td>天卡</td><td>不限制播放，点击开通获得更好的服务。</td><td>0.01</td><td>29.90</td><td>1</td><td><span class="st"><svg class="i fa" width="12.0" height="14" viewBox="0 0 1536 1792" ><path fill="currentColor" d="M1536 896C1536 472 1192 128 768 128C344 128 0 472 0 896C0 1320 344 1664 768 1664C1192 1664 1536 1320 1536 896Z"/></svg> <span class="su">启用</span></span></td><td>0</td><td>2023-12-05 17:21:35</td><td><span class="ob o1"><svg class="i fa" width="12.0" height="12" viewBox="0 0 1792 1792" ><path fill="currentColor" d="M1792 896C1792 879 1785 863 1773 851L1517 595C1505 583 1489 576 1472 576C1437 576 1408 605 1408 640V768H1024V384H1152C1187 384 1216 355 1216 320C1216 303 1209 287 1197 275L941 19C929 7 913 0 896 0C879 0 863 7 851 19L595 275C583 287 576 303 576 320C576 355 605 384 640 384H768V768H384V640C384 605 355 576 320 576C303 576 287 583 275 595L19 851C7 863 0 879 0 896C0 913 7 929 19 941L275 1197C287 1209 303 1216 320 1216C355 1216 384 1187 384 1152V1024H768V1408H640C605 1408 576 1437 576 1472C576 1489 583 1505 595 1517L851 1773C863 1785 879 1792 896 1792C913 1792 929 1785 941 1773L1197 1517C1209 1505 1216 1489 1216 1472C1216 1437 1187 1408 1152 1408H1024V1024H1408V1152C1408 1187 1437 1216 1472 1216C1489 1216 1505 1209 1517 1197L1773 941C1785 929 1792 913 1792 896Z"/></svg></span><span class="ob o2"><svg class="i fa" width="10.29" height="12" viewBox="0 0 1536 1792" ><path fill="currentColor" d="M363 1536H256V1408H128V1301L219 1210L454 1445ZM886 608C886 614 884 620 879 625L337 1167C332 1172 326 1174 320 1174C307 1174 298 1165 298 1152C298 1146 300 1140 305 1135L847 593C852 588 858 586 864 586C877 586 886 595 886 608ZM832 416 0 1248V1664H416L1248 832ZM1515 512C1515 478 1501 445 1478 421L1243 187C1219 163 1186 149 1152 149C1118 149 1085 163 1062 187L896 352L1312 768L1478 602C1501 579 1515 546 1515 512Z"/></svg></span><span class="ob o3"><svg class="i fa" width="9.43" height="12" viewBox="0 0 1408 1792" ><path fill="currentColor" d="M512 1376C512 1394 498 1408 480 1408H416C398 1408 384 1394 384 1376V672C384 654 398 640 416 640H480C498 640 512 654 512 672V1376ZM768 1376C768 1394 754 1408 736 1408H672C654 1408 640 1394 640 1376V672C640 654 654 640 672 640H736C754 640 768 654 768 672V1376ZM1024 1376C1024 1394 1010 1408 992 1408H928C910 1408 896 1394 896 1376V672C896 654 910 640 928 640H992C1010 640 1024 654 1024 672V1376ZM480 384 529 267C532 263 540 257 546 256H863C868 257 877 263 880 267L928 384ZM1408 416C1408 398 1394 384 1376 384H1067L997 217C977 168 917 128 864 128H544C491 128 431 168 411 217L341 384H32C14 384 0 398 0 416V480C0 498 14 512 32 512H128V1464C128 1574 200 1664 288 1664H1120C1208 1664 1280 1570 1280 1460V512H1376C1394 512 1408 498 1408 480Z"/></svg></span></td></tr>
<tr><td><span class="cb"></span></td><td>2</td><td>中文简体</td><td><span class="tm">月</span></td><td>月卡</td><td>不限制播放次数，点击开通获得更好的服务。</td><td>28.00</td><td>58.00</td><td>1</td><td><span class="st"><svg class="i fa" width="12.0" height="14" viewBox="0 0 1536 1792" ><path fill="currentColor" d="M1536 896C1536 472 1192 128 768 128C344 128 0 472 0 896C0 1320 344 1664 768 1664C1192 1664 1536 1320 1536 896Z"/></svg> <span class="su">启用</span></span></td><td>0</td><td>2023-07-06 17:45:57</td><td><span class="ob o1"><svg class="i fa" width="12.0" height="12" viewBox="0 0 1792 1792" ><path fill="currentColor" d="M1792 896C1792 879 1785 863 1773 851L1517 595C1505 583 1489 576 1472 576C1437 576 1408 605 1408 640V768H1024V384H1152C1187 384 1216 355 1216 320C1216 303 1209 287 1197 275L941 19C929 7 913 0 896 0C879 0 863 7 851 19L595 275C583 287 576 303 576 320C576 355 605 384 640 384H768V768H384V640C384 605 355 576 320 576C303 576 287 583 275 595L19 851C7 863 0 879 0 896C0 913 7 929 19 941L275 1197C287 1209 303 1216 320 1216C355 1216 384 1187 384 1152V1024H768V1408H640C605 1408 576 1437 576 1472C576 1489 583 1505 595 1517L851 1773C863 1785 879 1792 896 1792C913 1792 929 1785 941 1773L1197 1517C1209 1505 1216 1489 1216 1472C1216 1437 1187 1408 1152 1408H1024V1024H1408V1152C1408 1187 1437 1216 1472 1216C1489 1216 1505 1209 1517 1197L1773 941C1785 929 1792 913 1792 896Z"/></svg></span><span class="ob o2"><svg class="i fa" width="10.29" height="12" viewBox="0 0 1536 1792" ><path fill="currentColor" d="M363 1536H256V1408H128V1301L219 1210L454 1445ZM886 608C886 614 884 620 879 625L337 1167C332 1172 326 1174 320 1174C307 1174 298 1165 298 1152C298 1146 300 1140 305 1135L847 593C852 588 858 586 864 586C877 586 886 595 886 608ZM832 416 0 1248V1664H416L1248 832ZM1515 512C1515 478 1501 445 1478 421L1243 187C1219 163 1186 149 1152 149C1118 149 1085 163 1062 187L896 352L1312 768L1478 602C1501 579 1515 546 1515 512Z"/></svg></span><span class="ob o3"><svg class="i fa" width="9.43" height="12" viewBox="0 0 1408 1792" ><path fill="currentColor" d="M512 1376C512 1394 498 1408 480 1408H416C398 1408 384 1394 384 1376V672C384 654 398 640 416 640H480C498 640 512 654 512 672V1376ZM768 1376C768 1394 754 1408 736 1408H672C654 1408 640 1394 640 1376V672C640 654 654 640 672 640H736C754 640 768 654 768 672V1376ZM1024 1376C1024 1394 1010 1408 992 1408H928C910 1408 896 1394 896 1376V672C896 654 910 640 928 640H992C1010 640 1024 654 1024 672V1376ZM480 384 529 267C532 263 540 257 546 256H863C868 257 877 263 880 267L928 384ZM1408 416C1408 398 1394 384 1376 384H1067L997 217C977 168 917 128 864 128H544C491 128 431 168 411 217L341 384H32C14 384 0 398 0 416V480C0 498 14 512 32 512H128V1464C128 1574 200 1664 288 1664H1120C1208 1664 1280 1570 1280 1460V512H1376C1394 512 1408 498 1408 480Z"/></svg></span></td></tr>
<tr><td><span class="cb"></span></td><td>3</td><td>中文简体</td><td><span class="ty">年</span></td><td>年卡</td><td>不限制播放次数，点击开通获得更好的服务。</td><td>168.00</td><td>360.00</td><td>1</td><td><span class="st"><svg class="i fa" width="12.0" height="14" viewBox="0 0 1536 1792" ><path fill="currentColor" d="M1536 896C1536 472 1192 128 768 128C344 128 0 472 0 896C0 1320 344 1664 768 1664C1192 1664 1536 1320 1536 896Z"/></svg> <span class="su">启用</span></span></td><td>0</td><td>2023-07-06 17:46:03</td><td><span class="ob o1"><svg class="i fa" width="12.0" height="12" viewBox="0 0 1792 1792" ><path fill="currentColor" d="M1792 896C1792 879 1785 863 1773 851L1517 595C1505 583 1489 576 1472 576C1437 576 1408 605 1408 640V768H1024V384H1152C1187 384 1216 355 1216 320C1216 303 1209 287 1197 275L941 19C929 7 913 0 896 0C879 0 863 7 851 19L595 275C583 287 576 303 576 320C576 355 605 384 640 384H768V768H384V640C384 605 355 576 320 576C303 576 287 583 275 595L19 851C7 863 0 879 0 896C0 913 7 929 19 941L275 1197C287 1209 303 1216 320 1216C355 1216 384 1187 384 1152V1024H768V1408H640C605 1408 576 1437 576 1472C576 1489 583 1505 595 1517L851 1773C863 1785 879 1792 896 1792C913 1792 929 1785 941 1773L1197 1517C1209 1505 1216 1489 1216 1472C1216 1437 1187 1408 1152 1408H1024V1024H1408V1152C1408 1187 1437 1216 1472 1216C1489 1216 1505 1209 1517 1197L1773 941C1785 929 1792 913 1792 896Z"/></svg></span><span class="ob o2"><svg class="i fa" width="10.29" height="12" viewBox="0 0 1536 1792" ><path fill="currentColor" d="M363 1536H256V1408H128V1301L219 1210L454 1445ZM886 608C886 614 884 620 879 625L337 1167C332 1172 326 1174 320 1174C307 1174 298 1165 298 1152C298 1146 300 1140 305 1135L847 593C852 588 858 586 864 586C877 586 886 595 886 608ZM832 416 0 1248V1664H416L1248 832ZM1515 512C1515 478 1501 445 1478 421L1243 187C1219 163 1186 149 1152 149C1118 149 1085 163 1062 187L896 352L1312 768L1478 602C1501 579 1515 546 1515 512Z"/></svg></span><span class="ob o3"><svg class="i fa" width="9.43" height="12" viewBox="0 0 1408 1792" ><path fill="currentColor" d="M512 1376C512 1394 498 1408 480 1408H416C398 1408 384 1394 384 1376V672C384 654 398 640 416 640H480C498 640 512 654 512 672V1376ZM768 1376C768 1394 754 1408 736 1408H672C654 1408 640 1394 640 1376V672C640 654 654 640 672 640H736C754 640 768 654 768 672V1376ZM1024 1376C1024 1394 1010 1408 992 1408H928C910 1408 896 1394 896 1376V672C896 654 910 640 928 640H992C1010 640 1024 654 1024 672V1376ZM480 384 529 267C532 263 540 257 546 256H863C868 257 877 263 880 267L928 384ZM1408 416C1408 398 1394 384 1376 384H1067L997 217C977 168 917 128 864 128H544C491 128 431 168 411 217L341 384H32C14 384 0 398 0 416V480C0 498 14 512 32 512H128V1464C128 1574 200 1664 288 1664H1120C1208 1664 1280 1570 1280 1460V512H1376C1394 512 1408 498 1408 480Z"/></svg></span></td></tr>
<tr><td><span class="cb"></span></td><td>4</td><td>英文</td><td><span class="td">天</span></td><td>Day pass</td><td>Unrestricted playback, click to activate and enjoy better services.</td><td>0.01</td><td>29.90</td><td>1</td><td><span class="st"><svg class="i fa" width="12.0" height="14" viewBox="0 0 1536 1792" ><path fill="currentColor" d="M1536 896C1536 472 1192 128 768 128C344 128 0 472 0 896C0 1320 344 1664 768 1664C1192 1664 1536 1320 1536 896Z"/></svg> <span class="su">启用</span></span></td><td>0</td><td>2023-12-05 17:21:35</td><td><span class="ob o1"><svg class="i fa" width="12.0" height="12" viewBox="0 0 1792 1792" ><path fill="currentColor" d="M1792 896C1792 879 1785 863 1773 851L1517 595C1505 583 1489 576 1472 576C1437 576 1408 605 1408 640V768H1024V384H1152C1187 384 1216 355 1216 320C1216 303 1209 287 1197 275L941 19C929 7 913 0 896 0C879 0 863 7 851 19L595 275C583 287 576 303 576 320C576 355 605 384 640 384H768V768H384V640C384 605 355 576 320 576C303 576 287 583 275 595L19 851C7 863 0 879 0 896C0 913 7 929 19 941L275 1197C287 1209 303 1216 320 1216C355 1216 384 1187 384 1152V1024H768V1408H640C605 1408 576 1437 576 1472C576 1489 583 1505 595 1517L851 1773C863 1785 879 1792 896 1792C913 1792 929 1785 941 1773L1197 1517C1209 1505 1216 1489 1216 1472C1216 1437 1187 1408 1152 1408H1024V1024H1408V1152C1408 1187 1437 1216 1472 1216C1489 1216 1505 1209 1517 1197L1773 941C1785 929 1792 913 1792 896Z"/></svg></span><span class="ob o2"><svg class="i fa" width="10.29" height="12" viewBox="0 0 1536 1792" ><path fill="currentColor" d="M363 1536H256V1408H128V1301L219 1210L454 1445ZM886 608C886 614 884 620 879 625L337 1167C332 1172 326 1174 320 1174C307 1174 298 1165 298 1152C298 1146 300 1140 305 1135L847 593C852 588 858 586 864 586C877 586 886 595 886 608ZM832 416 0 1248V1664H416L1248 832ZM1515 512C1515 478 1501 445 1478 421L1243 187C1219 163 1186 149 1152 149C1118 149 1085 163 1062 187L896 352L1312 768L1478 602C1501 579 1515 546 1515 512Z"/></svg></span><span class="ob o3"><svg class="i fa" width="9.43" height="12" viewBox="0 0 1408 1792" ><path fill="currentColor" d="M512 1376C512 1394 498 1408 480 1408H416C398 1408 384 1394 384 1376V672C384 654 398 640 416 640H480C498 640 512 654 512 672V1376ZM768 1376C768 1394 754 1408 736 1408H672C654 1408 640 1394 640 1376V672C640 654 654 640 672 640H736C754 640 768 654 768 672V1376ZM1024 1376C1024 1394 1010 1408 992 1408H928C910 1408 896 1394 896 1376V672C896 654 910 640 928 640H992C1010 640 1024 654 1024 672V1376ZM480 384 529 267C532 263 540 257 546 256H863C868 257 877 263 880 267L928 384ZM1408 416C1408 398 1394 384 1376 384H1067L997 217C977 168 917 128 864 128H544C491 128 431 168 411 217L341 384H32C14 384 0 398 0 416V480C0 498 14 512 32 512H128V1464C128 1574 200 1664 288 1664H1120C1208 1664 1280 1570 1280 1460V512H1376C1394 512 1408 498 1408 480Z"/></svg></span></td></tr>
<tr><td><span class="cb"></span></td><td>5</td><td>英文</td><td><span class="tm">月</span></td><td>Monthly pass</td><td>Unrestricted playback, click to activate and enjoy better services.</td><td>28.00</td><td>58.00</td><td>1</td><td><span class="st"><svg class="i fa" width="12.0" height="14" viewBox="0 0 1536 1792" ><path fill="currentColor" d="M1536 896C1536 472 1192 128 768 128C344 128 0 472 0 896C0 1320 344 1664 768 1664C1192 1664 1536 1320 1536 896Z"/></svg> <span class="su">启用</span></span></td><td>0</td><td>2023-07-06 17:45:57</td><td><span class="ob o1"><svg class="i fa" width="12.0" height="12" viewBox="0 0 1792 1792" ><path fill="currentColor" d="M1792 896C1792 879 1785 863 1773 851L1517 595C1505 583 1489 576 1472 576C1437 576 1408 605 1408 640V768H1024V384H1152C1187 384 1216 355 1216 320C1216 303 1209 287 1197 275L941 19C929 7 913 0 896 0C879 0 863 7 851 19L595 275C583 287 576 303 576 320C576 355 605 384 640 384H768V768H384V640C384 605 355 576 320 576C303 576 287 583 275 595L19 851C7 863 0 879 0 896C0 913 7 929 19 941L275 1197C287 1209 303 1216 320 1216C355 1216 384 1187 384 1152V1024H768V1408H640C605 1408 576 1437 576 1472C576 1489 583 1505 595 1517L851 1773C863 1785 879 1792 896 1792C913 1792 929 1785 941 1773L1197 1517C1209 1505 1216 1489 1216 1472C1216 1437 1187 1408 1152 1408H1024V1024H1408V1152C1408 1187 1437 1216 1472 1216C1489 1216 1505 1209 1517 1197L1773 941C1785 929 1792 913 1792 896Z"/></svg></span><span class="ob o2"><svg class="i fa" width="10.29" height="12" viewBox="0 0 1536 1792" ><path fill="currentColor" d="M363 1536H256V1408H128V1301L219 1210L454 1445ZM886 608C886 614 884 620 879 625L337 1167C332 1172 326 1174 320 1174C307 1174 298 1165 298 1152C298 1146 300 1140 305 1135L847 593C852 588 858 586 864 586C877 586 886 595 886 608ZM832 416 0 1248V1664H416L1248 832ZM1515 512C1515 478 1501 445 1478 421L1243 187C1219 163 1186 149 1152 149C1118 149 1085 163 1062 187L896 352L1312 768L1478 602C1501 579 1515 546 1515 512Z"/></svg></span><span class="ob o3"><svg class="i fa" width="9.43" height="12" viewBox="0 0 1408 1792" ><path fill="currentColor" d="M512 1376C512 1394 498 1408 480 1408H416C398 1408 384 1394 384 1376V672C384 654 398 640 416 640H480C498 640 512 654 512 672V1376ZM768 1376C768 1394 754 1408 736 1408H672C654 1408 640 1394 640 1376V672C640 654 654 640 672 640H736C754 640 768 654 768 672V1376ZM1024 1376C1024 1394 1010 1408 992 1408H928C910 1408 896 1394 896 1376V672C896 654 910 640 928 640H992C1010 640 1024 654 1024 672V1376ZM480 384 529 267C532 263 540 257 546 256H863C868 257 877 263 880 267L928 384ZM1408 416C1408 398 1394 384 1376 384H1067L997 217C977 168 917 128 864 128H544C491 128 431 168 411 217L341 384H32C14 384 0 398 0 416V480C0 498 14 512 32 512H128V1464C128 1574 200 1664 288 1664H1120C1208 1664 1280 1570 1280 1460V512H1376C1394 512 1408 498 1408 480Z"/></svg></span></td></tr>
<tr class="hov"><td><span class="cb"></span></td><td>6</td><td>英文</td><td><span class="ty">年</span></td><td>Annual pass</td><td>Unrestricted playback, click to activate and enjoy better services.</td><td>168.00</td><td>360.00</td><td>1</td><td><span class="st"><svg class="i fa" width="12.0" height="14" viewBox="0 0 1536 1792" ><path fill="currentColor" d="M1536 896C1536 472 1192 128 768 128C344 128 0 472 0 896C0 1320 344 1664 768 1664C1192 1664 1536 1320 1536 896Z"/></svg> <span class="su">启用</span></span></td><td>0</td><td>2023-07-06 17:46:03</td><td><span class="ob o1"><svg class="i fa" width="12.0" height="12" viewBox="0 0 1792 1792" ><path fill="currentColor" d="M1792 896C1792 879 1785 863 1773 851L1517 595C1505 583 1489 576 1472 576C1437 576 1408 605 1408 640V768H1024V384H1152C1187 384 1216 355 1216 320C1216 303 1209 287 1197 275L941 19C929 7 913 0 896 0C879 0 863 7 851 19L595 275C583 287 576 303 576 320C576 355 605 384 640 384H768V768H384V640C384 605 355 576 320 576C303 576 287 583 275 595L19 851C7 863 0 879 0 896C0 913 7 929 19 941L275 1197C287 1209 303 1216 320 1216C355 1216 384 1187 384 1152V1024H768V1408H640C605 1408 576 1437 576 1472C576 1489 583 1505 595 1517L851 1773C863 1785 879 1792 896 1792C913 1792 929 1785 941 1773L1197 1517C1209 1505 1216 1489 1216 1472C1216 1437 1187 1408 1152 1408H1024V1024H1408V1152C1408 1187 1437 1216 1472 1216C1489 1216 1505 1209 1517 1197L1773 941C1785 929 1792 913 1792 896Z"/></svg></span><span class="ob o2"><svg class="i fa" width="10.29" height="12" viewBox="0 0 1536 1792" ><path fill="currentColor" d="M363 1536H256V1408H128V1301L219 1210L454 1445ZM886 608C886 614 884 620 879 625L337 1167C332 1172 326 1174 320 1174C307 1174 298 1165 298 1152C298 1146 300 1140 305 1135L847 593C852 588 858 586 864 586C877 586 886 595 886 608ZM832 416 0 1248V1664H416L1248 832ZM1515 512C1515 478 1501 445 1478 421L1243 187C1219 163 1186 149 1152 149C1118 149 1085 163 1062 187L896 352L1312 768L1478 602C1501 579 1515 546 1515 512Z"/></svg></span><span class="ob o3"><svg class="i fa" width="9.43" height="12" viewBox="0 0 1408 1792" ><path fill="currentColor" d="M512 1376C512 1394 498 1408 480 1408H416C398 1408 384 1394 384 1376V672C384 654 398 640 416 640H480C498 640 512 654 512 672V1376ZM768 1376C768 1394 754 1408 736 1408H672C654 1408 640 1394 640 1376V672C640 654 654 640 672 640H736C754 640 768 654 768 672V1376ZM1024 1376C1024 1394 1010 1408 992 1408H928C910 1408 896 1394 896 1376V672C896 654 910 640 928 640H992C1010 640 1024 654 1024 672V1376ZM480 384 529 267C532 263 540 257 546 256H863C868 257 877 263 880 267L928 384ZM1408 416C1408 398 1394 384 1376 384H1067L997 217C977 168 917 128 864 128H544C491 128 431 168 411 217L341 384H32C14 384 0 398 0 416V480C0 498 14 512 32 512H128V1464C128 1574 200 1664 288 1664H1120C1208 1664 1280 1570 1280 1460V512H1376C1394 512 1408 498 1408 480Z"/></svg></span></td></tr>
<tr><td><span class="cb"></span></td><td>7</td><td>中文繁体</td><td><span class="td">天</span></td><td>天卡</td><td>不限制播放，點擊開通獲取更好的服務。</td><td>0.01</td><td>29.90</td><td>1</td><td><span class="st"><svg class="i fa" width="12.0" height="14" viewBox="0 0 1536 1792" ><path fill="currentColor" d="M1536 896C1536 472 1192 128 768 128C344 128 0 472 0 896C0 1320 344 1664 768 1664C1192 1664 1536 1320 1536 896Z"/></svg> <span class="su">启用</span></span></td><td>0</td><td>2023-12-05 17:21:35</td><td><span class="ob o1"><svg class="i fa" width="12.0" height="12" viewBox="0 0 1792 1792" ><path fill="currentColor" d="M1792 896C1792 879 1785 863 1773 851L1517 595C1505 583 1489 576 1472 576C1437 576 1408 605 1408 640V768H1024V384H1152C1187 384 1216 355 1216 320C1216 303 1209 287 1197 275L941 19C929 7 913 0 896 0C879 0 863 7 851 19L595 275C583 287 576 303 576 320C576 355 605 384 640 384H768V768H384V640C384 605 355 576 320 576C303 576 287 583 275 595L19 851C7 863 0 879 0 896C0 913 7 929 19 941L275 1197C287 1209 303 1216 320 1216C355 1216 384 1187 384 1152V1024H768V1408H640C605 1408 576 1437 576 1472C576 1489 583 1505 595 1517L851 1773C863 1785 879 1792 896 1792C913 1792 929 1785 941 1773L1197 1517C1209 1505 1216 1489 1216 1472C1216 1437 1187 1408 1152 1408H1024V1024H1408V1152C1408 1187 1437 1216 1472 1216C1489 1216 1505 1209 1517 1197L1773 941C1785 929 1792 913 1792 896Z"/></svg></span><span class="ob o2"><svg class="i fa" width="10.29" height="12" viewBox="0 0 1536 1792" ><path fill="currentColor" d="M363 1536H256V1408H128V1301L219 1210L454 1445ZM886 608C886 614 884 620 879 625L337 1167C332 1172 326 1174 320 1174C307 1174 298 1165 298 1152C298 1146 300 1140 305 1135L847 593C852 588 858 586 864 586C877 586 886 595 886 608ZM832 416 0 1248V1664H416L1248 832ZM1515 512C1515 478 1501 445 1478 421L1243 187C1219 163 1186 149 1152 149C1118 149 1085 163 1062 187L896 352L1312 768L1478 602C1501 579 1515 546 1515 512Z"/></svg></span><span class="ob o3"><svg class="i fa" width="9.43" height="12" viewBox="0 0 1408 1792" ><path fill="currentColor" d="M512 1376C512 1394 498 1408 480 1408H416C398 1408 384 1394 384 1376V672C384 654 398 640 416 640H480C498 640 512 654 512 672V1376ZM768 1376C768 1394 754 1408 736 1408H672C654 1408 640 1394 640 1376V672C640 654 654 640 672 640H736C754 640 768 654 768 672V1376ZM1024 1376C1024 1394 1010 1408 992 1408H928C910 1408 896 1394 896 1376V672C896 654 910 640 928 640H992C1010 640 1024 654 1024 672V1376ZM480 384 529 267C532 263 540 257 546 256H863C868 257 877 263 880 267L928 384ZM1408 416C1408 398 1394 384 1376 384H1067L997 217C977 168 917 128 864 128H544C491 128 431 168 411 217L341 384H32C14 384 0 398 0 416V480C0 498 14 512 32 512H128V1464C128 1574 200 1664 288 1664H1120C1208 1664 1280 1570 1280 1460V512H1376C1394 512 1408 498 1408 480Z"/></svg></span></td></tr>
<tr><td><span class="cb"></span></td><td>8</td><td>中文繁体</td><td><span class="tm">月</span></td><td>月卡</td><td>不限制播放，點擊開通獲取更好的服務。</td><td>28.00</td><td>58.00</td><td>1</td><td><span class="st"><svg class="i fa" width="12.0" height="14" viewBox="0 0 1536 1792" ><path fill="currentColor" d="M1536 896C1536 472 1192 128 768 128C344 128 0 472 0 896C0 1320 344 1664 768 1664C1192 1664 1536 1320 1536 896Z"/></svg> <span class="su">启用</span></span></td><td>0</td><td>2023-07-06 17:45:57</td><td><span class="ob o1"><svg class="i fa" width="12.0" height="12" viewBox="0 0 1792 1792" ><path fill="currentColor" d="M1792 896C1792 879 1785 863 1773 851L1517 595C1505 583 1489 576 1472 576C1437 576 1408 605 1408 640V768H1024V384H1152C1187 384 1216 355 1216 320C1216 303 1209 287 1197 275L941 19C929 7 913 0 896 0C879 0 863 7 851 19L595 275C583 287 576 303 576 320C576 355 605 384 640 384H768V768H384V640C384 605 355 576 320 576C303 576 287 583 275 595L19 851C7 863 0 879 0 896C0 913 7 929 19 941L275 1197C287 1209 303 1216 320 1216C355 1216 384 1187 384 1152V1024H768V1408H640C605 1408 576 1437 576 1472C576 1489 583 1505 595 1517L851 1773C863 1785 879 1792 896 1792C913 1792 929 1785 941 1773L1197 1517C1209 1505 1216 1489 1216 1472C1216 1437 1187 1408 1152 1408H1024V1024H1408V1152C1408 1187 1437 1216 1472 1216C1489 1216 1505 1209 1517 1197L1773 941C1785 929 1792 913 1792 896Z"/></svg></span><span class="ob o2"><svg class="i fa" width="10.29" height="12" viewBox="0 0 1536 1792" ><path fill="currentColor" d="M363 1536H256V1408H128V1301L219 1210L454 1445ZM886 608C886 614 884 620 879 625L337 1167C332 1172 326 1174 320 1174C307 1174 298 1165 298 1152C298 1146 300 1140 305 1135L847 593C852 588 858 586 864 586C877 586 886 595 886 608ZM832 416 0 1248V1664H416L1248 832ZM1515 512C1515 478 1501 445 1478 421L1243 187C1219 163 1186 149 1152 149C1118 149 1085 163 1062 187L896 352L1312 768L1478 602C1501 579 1515 546 1515 512Z"/></svg></span><span class="ob o3"><svg class="i fa" width="9.43" height="12" viewBox="0 0 1408 1792" ><path fill="currentColor" d="M512 1376C512 1394 498 1408 480 1408H416C398 1408 384 1394 384 1376V672C384 654 398 640 416 640H480C498 640 512 654 512 672V1376ZM768 1376C768 1394 754 1408 736 1408H672C654 1408 640 1394 640 1376V672C640 654 654 640 672 640H736C754 640 768 654 768 672V1376ZM1024 1376C1024 1394 1010 1408 992 1408H928C910 1408 896 1394 896 1376V672C896 654 910 640 928 640H992C1010 640 1024 654 1024 672V1376ZM480 384 529 267C532 263 540 257 546 256H863C868 257 877 263 880 267L928 384ZM1408 416C1408 398 1394 384 1376 384H1067L997 217C977 168 917 128 864 128H544C491 128 431 168 411 217L341 384H32C14 384 0 398 0 416V480C0 498 14 512 32 512H128V1464C128 1574 200 1664 288 1664H1120C1208 1664 1280 1570 1280 1460V512H1376C1394 512 1408 498 1408 480Z"/></svg></span></td></tr>
<tr><td><span class="cb"></span></td><td>9</td><td>中文繁体</td><td><span class="ty">年</span></td><td>年卡</td><td>不限制播放，點擊開通獲取更好的服務。</td><td>168.00</td><td>360.00</td><td>1</td><td><span class="st"><svg class="i fa" width="12.0" height="14" viewBox="0 0 1536 1792" ><path fill="currentColor" d="M1536 896C1536 472 1192 128 768 128C344 128 0 472 0 896C0 1320 344 1664 768 1664C1192 1664 1536 1320 1536 896Z"/></svg> <span class="su">启用</span></span></td><td>0</td><td>2023-07-06 17:46:03</td><td><span class="ob o1"><svg class="i fa" width="12.0" height="12" viewBox="0 0 1792 1792" ><path fill="currentColor" d="M1792 896C1792 879 1785 863 1773 851L1517 595C1505 583 1489 576 1472 576C1437 576 1408 605 1408 640V768H1024V384H1152C1187 384 1216 355 1216 320C1216 303 1209 287 1197 275L941 19C929 7 913 0 896 0C879 0 863 7 851 19L595 275C583 287 576 303 576 320C576 355 605 384 640 384H768V768H384V640C384 605 355 576 320 576C303 576 287 583 275 595L19 851C7 863 0 879 0 896C0 913 7 929 19 941L275 1197C287 1209 303 1216 320 1216C355 1216 384 1187 384 1152V1024H768V1408H640C605 1408 576 1437 576 1472C576 1489 583 1505 595 1517L851 1773C863 1785 879 1792 896 1792C913 1792 929 1785 941 1773L1197 1517C1209 1505 1216 1489 1216 1472C1216 1437 1187 1408 1152 1408H1024V1024H1408V1152C1408 1187 1437 1216 1472 1216C1489 1216 1505 1209 1517 1197L1773 941C1785 929 1792 913 1792 896Z"/></svg></span><span class="ob o2"><svg class="i fa" width="10.29" height="12" viewBox="0 0 1536 1792" ><path fill="currentColor" d="M363 1536H256V1408H128V1301L219 1210L454 1445ZM886 608C886 614 884 620 879 625L337 1167C332 1172 326 1174 320 1174C307 1174 298 1165 298 1152C298 1146 300 1140 305 1135L847 593C852 588 858 586 864 586C877 586 886 595 886 608ZM832 416 0 1248V1664H416L1248 832ZM1515 512C1515 478 1501 445 1478 421L1243 187C1219 163 1186 149 1152 149C1118 149 1085 163 1062 187L896 352L1312 768L1478 602C1501 579 1515 546 1515 512Z"/></svg></span><span class="ob o3"><svg class="i fa" width="9.43" height="12" viewBox="0 0 1408 1792" ><path fill="currentColor" d="M512 1376C512 1394 498 1408 480 1408H416C398 1408 384 1394 384 1376V672C384 654 398 640 416 640H480C498 640 512 654 512 672V1376ZM768 1376C768 1394 754 1408 736 1408H672C654 1408 640 1394 640 1376V672C640 654 654 640 672 640H736C754 640 768 654 768 672V1376ZM1024 1376C1024 1394 1010 1408 992 1408H928C910 1408 896 1394 896 1376V672C896 654 910 640 928 640H992C1010 640 1024 654 1024 672V1376ZM480 384 529 267C532 263 540 257 546 256H863C868 257 877 263 880 267L928 384ZM1408 416C1408 398 1394 384 1376 384H1067L997 217C977 168 917 128 864 128H544C491 128 431 168 411 217L341 384H32C14 384 0 398 0 416V480C0 498 14 512 32 512H128V1464C128 1574 200 1664 288 1664H1120C1208 1664 1280 1570 1280 1460V512H1376C1394 512 1408 498 1408 480Z"/></svg></span></td></tr>
<tr><td><span class="cb"></span></td><td>10</td><td>泰语</td><td><span class="td">天</span></td><td class="th">ข้อแรก: บัตรวัน</td><td class="th">การเล่นไว้เสมอ คลิกเพื่อเปิดใช้งานและรับบริการที่ดีกว่า</td><td>0.01</td><td>29.90</td><td>1</td><td><span class="st"><svg class="i fa" width="12.0" height="14" viewBox="0 0 1536 1792" ><path fill="currentColor" d="M1536 896C1536 472 1192 128 768 128C344 128 0 472 0 896C0 1320 344 1664 768 1664C1192 1664 1536 1320 1536 896Z"/></svg> <span class="su">启用</span></span></td><td>0</td><td>2023-12-05 17:21:35</td><td><span class="ob o1"><svg class="i fa" width="12.0" height="12" viewBox="0 0 1792 1792" ><path fill="currentColor" d="M1792 896C1792 879 1785 863 1773 851L1517 595C1505 583 1489 576 1472 576C1437 576 1408 605 1408 640V768H1024V384H1152C1187 384 1216 355 1216 320C1216 303 1209 287 1197 275L941 19C929 7 913 0 896 0C879 0 863 7 851 19L595 275C583 287 576 303 576 320C576 355 605 384 640 384H768V768H384V640C384 605 355 576 320 576C303 576 287 583 275 595L19 851C7 863 0 879 0 896C0 913 7 929 19 941L275 1197C287 1209 303 1216 320 1216C355 1216 384 1187 384 1152V1024H768V1408H640C605 1408 576 1437 576 1472C576 1489 583 1505 595 1517L851 1773C863 1785 879 1792 896 1792C913 1792 929 1785 941 1773L1197 1517C1209 1505 1216 1489 1216 1472C1216 1437 1187 1408 1152 1408H1024V1024H1408V1152C1408 1187 1437 1216 1472 1216C1489 1216 1505 1209 1517 1197L1773 941C1785 929 1792 913 1792 896Z"/></svg></span><span class="ob o2"><svg class="i fa" width="10.29" height="12" viewBox="0 0 1536 1792" ><path fill="currentColor" d="M363 1536H256V1408H128V1301L219 1210L454 1445ZM886 608C886 614 884 620 879 625L337 1167C332 1172 326 1174 320 1174C307 1174 298 1165 298 1152C298 1146 300 1140 305 1135L847 593C852 588 858 586 864 586C877 586 886 595 886 608ZM832 416 0 1248V1664H416L1248 832ZM1515 512C1515 478 1501 445 1478 421L1243 187C1219 163 1186 149 1152 149C1118 149 1085 163 1062 187L896 352L1312 768L1478 602C1501 579 1515 546 1515 512Z"/></svg></span><span class="ob o3"><svg class="i fa" width="9.43" height="12" viewBox="0 0 1408 1792" ><path fill="currentColor" d="M512 1376C512 1394 498 1408 480 1408H416C398 1408 384 1394 384 1376V672C384 654 398 640 416 640H480C498 640 512 654 512 672V1376ZM768 1376C768 1394 754 1408 736 1408H672C654 1408 640 1394 640 1376V672C640 654 654 640 672 640H736C754 640 768 654 768 672V1376ZM1024 1376C1024 1394 1010 1408 992 1408H928C910 1408 896 1394 896 1376V672C896 654 910 640 928 640H992C1010 640 1024 654 1024 672V1376ZM480 384 529 267C532 263 540 257 546 256H863C868 257 877 263 880 267L928 384ZM1408 416C1408 398 1394 384 1376 384H1067L997 217C977 168 917 128 864 128H544C491 128 431 168 411 217L341 384H32C14 384 0 398 0 416V480C0 498 14 512 32 512H128V1464C128 1574 200 1664 288 1664H1120C1208 1664 1280 1570 1280 1460V512H1376C1394 512 1408 498 1408 480Z"/></svg></span></td></tr>

</tbody>
</table>
<div id="wm">TG @yc099</div>
<div id="pinfo">显示第 1 到第 10 条记录，总共 21 条记录 <span style="margin-left:1px">每页显示</span> <span style="display:inline-block;width:52px;height:33px;line-height:31px;border:1px solid #ddd;border-radius:3px;background:#f4f4f4;text-align:center;vertical-align:middle;margin:-6px 0 -6px 0;font-size:13px;color:#444">10 <svg class="i fa" width="6.86" height="12" viewBox="0 0 1024 1792" ><path fill="currentColor" d="M1024 1216C1024 1199 1017 1183 1005 1171L557 723C545 711 529 704 512 704C495 704 479 711 467 723L19 1171C7 1183 0 1199 0 1216C0 1251 29 1280 64 1280H960C995 1280 1024 1251 1024 1216Z"/></svg></span> 条记录</div>
<div class="pg" style="left:1612px;width:68px;border-radius:3px 0 0 3px">上一页</div>
<div class="pg on" style="left:1679px;width:33.500px">1</div>
<div class="pg" style="left:1711.500px;width:33.500px">2</div>
<div class="pg" style="left:1744px;width:34px">3</div>
<div class="pg" style="left:1777px;width:68px;border-radius:0 3px 3px 0">下一页</div>
<div class="abs" style="left:1850px;top:715px;width:50px;height:33px;border:1px solid #d2d6de;background:#fff"></div>
<div class="abs" style="left:1905px;top:716px;width:52px;height:33px;line-height:29px;border:1px solid #ddd;border-radius:3px;background:#f4f4f4;color:#444;text-align:center;font-size:13px">跳转</div>
</body>
</html>
